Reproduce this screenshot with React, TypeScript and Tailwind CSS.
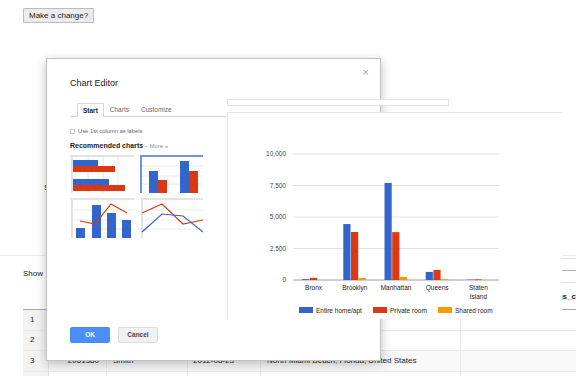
import React from 'react';

const SERIES = ['Entire home/apt', 'Private room', 'Shared room'];
const COLORS = ['#3366cc', '#dc3912', '#ff9900'];

const BOROUGHS = [
  { label: ['Bronx'], values: [70, 170, 0] },
  { label: ['Brooklyn'], values: [4440, 3810, 160] },
  { label: ['Manhattan'], values: [7700, 3800, 240] },
  { label: ['Queens'], values: [640, 800, 60] },
  { label: ['Staten', 'Island'], values: [30, 50, 0] },
];

const PLOT = { x: 65, y: 41, w: 206, h: 126, max: 10000 };

const yOf = (v: number) => PLOT.y + PLOT.h - (v / PLOT.max) * PLOT.h;

const BoroughChart: React.FC = () => {
  const step = PLOT.w / BOROUGHS.length;
  return (
    <svg width="334" height="207" className="block" fontFamily="'Liberation Sans', Arial, sans-serif">
      {[10000, 7500, 5000, 2500, 0].map((t) => (
        <g key={t}>
          <line
            x1={PLOT.x}
            x2={PLOT.x + PLOT.w}
            y1={yOf(t)}
            y2={yOf(t)}
            stroke={t === 0 ? '#9e9e9e' : '#e2e2e2'}
            strokeWidth="1"
          />
          <text x="58" y={yOf(t) + 2.3} textAnchor="end" fontSize="6.5" fill="#444">
            {t.toLocaleString('en-US')}
          </text>
        </g>
      ))}
      {BOROUGHS.map((b, i) => {
        const cx = PLOT.x + step * (i + 0.5);
        return (
          <g key={b.label[0]}>
            {b.values.map((v, j) => {
              const top = yOf(v);
              return (
                <rect
                  key={j}
                  x={cx - 11.5 + j * 7.7}
                  y={top}
                  width="7.2"
                  height={PLOT.y + PLOT.h - top}
                  fill={COLORS[j]}
                />
              );
            })}
            {b.label.map((l, k) => (
              <text key={l} x={cx} y={176.5 + k * 9} textAnchor="middle" fontSize="6.5" fill="#222">
                {l}
              </text>
            ))}
          </g>
        );
      })}
      {SERIES.map((s, j) => {
        const x = [71, 145, 210][j];
        return (
          <g key={s}>
            <rect x={x} y="194" width="14" height="6" fill={COLORS[j]} />
            <text x={x + 17} y="199.5" fontSize="6.5" fill="#222">
              {s}
            </text>
          </g>
        );
      })}
    </svg>
  );
};

const Thumb: React.FC<{ kind: number; selected?: boolean }> = ({ kind, selected }) => (
  <svg width="64" height={kind < 2 ? 38 : 40} className="block">
    {kind === 0 && (
      <g>
        <rect x="0" y="0" width="64" height="2" fill="#e3e3e3" />
        <rect x="1" y="0" width="2" height="38" fill="#e3e3e3" />
        {[18, 33, 48].map((x) => (
          <line key={x} x1={x} x2={x} y1="2" y2="38" stroke="#e6e6e6" />
        ))}
        <rect x="3" y="5" width="25" height="6" fill="#3366cc" />
        <rect x="3" y="11" width="42" height="6" fill="#dc3912" />
        <rect x="3" y="24" width="36" height="6" fill="#3366cc" />
        <rect x="3" y="30" width="52" height="6" fill="#dc3912" />
      </g>
    )}
    {kind === 1 && (
      <g>
        {[11, 21, 29].map((y) => (
          <line key={y} x1="3" x2="64" y1={y} y2={y} stroke="#e6e6e6" />
        ))}
        <rect x="10" y="16" width="9" height="22" fill="#3366cc" />
        <rect x="19" y="25" width="9" height="13" fill="#dc3912" />
        <rect x="41" y="6" width="9" height="32" fill="#3366cc" />
        <rect x="50" y="16" width="9" height="22" fill="#dc3912" />
        {selected && (
          <g>
            <rect x="1" y="0" width="63" height="2" fill="#6f94e6" />
            <rect x="1" y="0" width="2" height="38" fill="#6f94e6" />
          </g>
        )}
      </g>
    )}
    {kind === 2 && (
      <g>
        <rect x="0" y="0" width="64" height="2" fill="#e3e3e3" />
        <rect x="1" y="0" width="2" height="40" fill="#e3e3e3" />
        {[12, 22, 31].map((y) => (
          <line key={y} x1="3" x2="64" y1={y} y2={y} stroke="#ececec" />
        ))}
        <rect x="6" y="30" width="9" height="10" fill="#3366cc" />
        <rect x="22" y="7" width="9" height="33" fill="#3366cc" />
        <rect x="37" y="15" width="9" height="25" fill="#3366cc" />
        <rect x="52" y="22" width="9" height="18" fill="#3366cc" />
        <polyline points="10,23 25,26 41,6 57,15" fill="none" stroke="#dc3912" strokeWidth="1.2" />
      </g>
    )}
    {kind === 3 && (
      <g>
        <rect x="2" y="0" width="62" height="2" fill="#e3e3e3" />
        <rect x="2" y="0" width="2" height="40" fill="#e3e3e3" />
        {[12, 22, 31].map((y) => (
          <line key={y} x1="4" x2="64" y1={y} y2={y} stroke="#ececec" />
        ))}
        <polyline points="3,15 23,6 44,26 64,22" fill="none" stroke="#dc3912" strokeWidth="1.2" />
        <polyline points="3,34 23,16 44,18 64,34" fill="none" stroke="#3366cc" strokeWidth="1.2" />
      </g>
    )}
  </svg>
);

const ChartEditor: React.FC = () => (
  <div className="absolute left-[46px] top-[58px] w-[335px] h-[303px] bg-white border border-[#c2c2c2] shadow-[0_3px_10px_rgba(0,0,0,0.25)] pl-[23px]">
    <span className="absolute right-[11px] top-[8px] text-[11px] leading-[11px] text-[#a3a3a3]">×</span>
    <div className="mt-[19px] text-[9px] leading-[11px] text-[#222]">Chart Editor</div>

    <div className="mt-[14px] flex w-[156px] pl-[7px] border-b border-[#d6d6d6] text-[6.5px] leading-[13px]">
      <div className="-mb-px px-[5px] border border-b-0 border-[#d6d6d6] bg-white font-bold text-[#222]">Start</div>
      <div className="px-[6px] text-[#666]">Charts</div>
      <div className="px-[6px] text-[#666]">Customize</div>
    </div>

    <div className="mt-[10px] flex items-center h-[8px] text-[5.8px] text-[#666]">
      <span className="w-[5px] h-[5px] border border-[#d0d0d0] mr-[3px]" />
      Use 1st column as labels
    </div>

    <div className="mt-[7px] h-[8px] flex items-center text-[7px] whitespace-pre">
      <span className="font-bold text-[#222]">Recommended charts</span>
      <span className="text-[#777]"> - </span>
      <span className="text-[#8a8fa8] text-[6px]">More »</span>
    </div>

    <div className="mt-[5px] grid grid-cols-[64px_64px] gap-[5px] w-[133px]">
      <Thumb kind={0} />
      <Thumb kind={1} selected />
      <Thumb kind={2} />
      <Thumb kind={3} />
    </div>

    <div className="mt-[89px] flex gap-[8px] text-[6.5px] font-bold">
      <button className="w-[40px] h-[16px] rounded-[2px] bg-[#4d8ffa] border border-[#4a87ee] text-white">OK</button>
      <button className="w-[40px] h-[16px] rounded-[2px] bg-[#f1f1f1] border border-[#dcdcdc] text-[#444]">Cancel</button>
    </div>

    <div className="absolute left-[180px] top-[40px] w-[222px] h-[7px] bg-white border border-[#e3e3e3]" />
    <div className="absolute left-[180px] top-[53px] w-[335px] h-[207px] bg-white border-t border-l border-[#e6e6e6]">
      <BoroughChart />
    </div>
  </div>
);

const COLS = 'grid grid-cols-[26px_58px_81px_73px_200px_1fr]';

const App: React.FC = () => {
  const rows = [
    ['1', '', '', '', ''],
    ['2', '', '', '', ''],
    ['3', '2061580', 'Smith', '2012-08-23', 'North Miami Beach, Florida, United States'],
    ['', '', '', '', ''],
  ];
  return (
    <div className="relative w-[576px] h-[376px] overflow-hidden bg-white font-['Liberation_Sans',Arial,sans-serif] text-[#222]">
      <div className="flex pt-[8px] pl-[23px]">
        <button className="h-[15px] px-[5px] text-[8px] leading-[13px] text-[#222] bg-[#ececec] border border-[#bdbdbd] rounded-[1px]">
          Make a change?
        </button>
      </div>

      <div className="mt-[160px] pl-[44px] text-[8px] leading-[10px]">Select a chart type</div>

      <div className="mt-[62px] border-t border-[#ececec]" />

      <div className="flex items-start mt-[1px]">
        <div className="mt-[12px] pl-[23px] text-[8px] leading-[10px]">Show</div>
        <div className="ml-auto w-[15px] h-[25px] border-b border-t border-[#e4e4e4] mt-[1px] flex items-center">
          <div className="w-full border-t border-[#b0b0b0]" />
        </div>
      </div>

      <div className="mt-[2px] ml-[23px] text-[8px]">
        <div className={`${COLS} h-[24px] items-center font-bold`}>
          <div />
          <div />
          <div />
          <div />
          <div />
          <div className="pl-[78px] overflow-hidden whitespace-nowrap">listings_count</div>
        </div>
        <div className="border-t border-[#a9a9a9]">
          {rows.map((r, i) => (
            <div key={i} className={`${COLS} h-[20.5px] items-center border-b border-[#e8e8e8] ${i === 2 ? 'bg-[#f8f8f8]' : ''}`}>
              <div className="h-full flex items-center pl-[7px] bg-[#f3f3f3] border-r border-[#e0e0e0]">{r[0]}</div>
              <div className="h-full flex items-center justify-end pr-[7px] border-r border-[#e8e8e8]">{r[1]}</div>
              <div className="h-full flex items-center pl-[6px] border-r border-[#e8e8e8]">{r[2]}</div>
              <div className="h-full flex items-center pl-[5px] border-r border-[#e8e8e8]">{r[3]}</div>
              <div className="h-full flex items-center pl-[6px] border-r border-[#e8e8e8]">{r[4]}</div>
              <div />
            </div>
          ))}
        </div>
      </div>

      <ChartEditor />
    </div>
  );
};

export default App;
